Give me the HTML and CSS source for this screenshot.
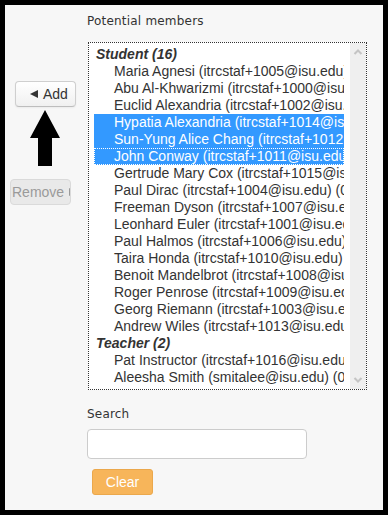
FILE: index.html
```html
<!DOCTYPE html>
<html>
<head>
<meta charset="utf-8">
<link rel="stylesheet" href="styles.css">
</head>
<body>
<div class="frame">
  <div class="side">
    <button class="btn-add"><span class="tri-left"></span>Add</button>
    <svg class="pointer" width="30" height="56" viewBox="0 0 30 56"><polygon points="15,0 30,28 22,28 22,56 8,56 8,28 0,28" fill="#000"/></svg>
    <button class="btn-remove" disabled>Remove<span class="tri-right"></span></button>
  </div>
  <div class="main">
    <div class="label">Potential members</div>
    <div class="listbox">
      <div class="items">
        <div class="group">Student (16)</div>
        <div class="opt">Maria Agnesi (itrcstaf+1005@isu.edu) (0)</div>
        <div class="opt">Abu Al-Khwarizmi (itrcstaf+1000@isu.edu) (0)</div>
        <div class="opt">Euclid Alexandria (itrcstaf+1002@isu.edu) (0)</div>
        <div class="opt sel">Hypatia Alexandria (itrcstaf+1014@isu.edu) (0)</div>
        <div class="opt sel">Sun-Yung Alice Chang (itrcstaf+1012@isu.edu) (0)</div>
        <div class="opt sel focus">John Conway (itrcstaf+1011@isu.edu) (0)</div>
        <div class="opt">Gertrude Mary Cox (itrcstaf+1015@isu.edu) (0)</div>
        <div class="opt">Paul Dirac (itrcstaf+1004@isu.edu) (0)</div>
        <div class="opt">Freeman Dyson (itrcstaf+1007@isu.edu) (0)</div>
        <div class="opt">Leonhard Euler (itrcstaf+1001@isu.edu) (0)</div>
        <div class="opt">Paul Halmos (itrcstaf+1006@isu.edu) (0)</div>
        <div class="opt">Taira Honda (itrcstaf+1010@isu.edu) (0)</div>
        <div class="opt">Benoit Mandelbrot (itrcstaf+1008@isu.edu) (0)</div>
        <div class="opt">Roger Penrose (itrcstaf+1009@isu.edu) (0)</div>
        <div class="opt">Georg Riemann (itrcstaf+1003@isu.edu) (0)</div>
        <div class="opt">Andrew Wiles (itrcstaf+1013@isu.edu) (0)</div>
        <div class="group">Teacher (2)</div>
        <div class="opt">Pat Instructor (itrcstaf+1016@isu.edu) (0)</div>
        <div class="opt">Aleesha Smith (smitalee@isu.edu) (0)</div>
      </div>
      <div class="scrollbar">
        <svg width="16" height="12" viewBox="0 0 16 12"><polyline points="4.5,9 8,5.5 11.5,9" fill="none" stroke="#c4c4c4" stroke-width="2"/></svg>
        <svg width="16" height="12" viewBox="0 0 16 12"><polyline points="4.5,3 8,6.5 11.5,3" fill="none" stroke="#c4c4c4" stroke-width="2"/></svg>
      </div>
    </div>
    <div class="label search-label">Search</div>
    <input class="search" type="text">
    <button class="btn-clear">Clear</button>
  </div>
</div>
</body>
</html>
```
FILE: styles.css
```css
html, body {
  margin: 0;
  padding: 0;
}
body {
  background: #000;
  padding: 5px;
  width: 378px;
  height: 505px;
}
.frame {
  background: #f7f7f7;
  height: 505px;
  display: flex;
}
.side {
  width: 82px;
  display: flex;
  flex-direction: column;
  align-items: flex-start;
  padding-top: 76px;
}
.btn-add {
  margin-left: 10px;
  width: 61px;
  height: 26px;
  padding: 0 0 0 14px;
  display: flex;
  align-items: center;
  border: 1px solid #cfcfcf;
  border-bottom-color: #bdbdbd;
  border-radius: 4px;
  background: linear-gradient(#ffffff, #f0f0f0);
  color: #333;
  font: 14px "Liberation Sans", Arial, sans-serif;
  box-shadow: 0 1px 2px rgba(0,0,0,.05);
}
.tri-left {
  display: inline-block;
  width: 0;
  height: 0;
  border-right: 8px solid #333;
  border-top: 4.5px solid transparent;
  border-bottom: 4.5px solid transparent;
  margin-right: 5px;
}
.pointer {
  display: block;
  margin-left: 25px;
  margin-top: 3px;
}
.btn-remove {
  margin-left: 5px;
  margin-top: 13px;
  width: 61px;
  height: 26px;
  padding: 0 0 0 1px;
  display: flex;
  align-items: center;
  overflow: hidden;
  white-space: nowrap;
  border: 1px solid #dadada;
  border-radius: 4px;
  background: #e9e9e9;
  color: #9a9a9a;
  font: 14px "Liberation Sans", Arial, sans-serif;
}
.tri-right {
  display: inline-block;
  flex: none;
  width: 0;
  height: 0;
  border-left: 8px solid #9a9a9a;
  border-top: 4.5px solid transparent;
  border-bottom: 4.5px solid transparent;
  margin-left: 5px;
}
.main {
  display: flex;
  flex-direction: column;
  align-items: flex-start;
  padding-top: 7px;
}
.label {
  font: 12px/18px "DejaVu Sans", Verdana, sans-serif;
  letter-spacing: 0.2px;
  color: #333;
  margin-bottom: 12px;
}
.listbox {
  margin-left: 1px;
  width: 277px;
  height: 346px;
  border: 1px dotted #333;
  background: #fff;
  display: flex;
}
.items {
  width: 250px;
  padding: 3px 6px 3px 5px;
  overflow: hidden;
  font: 14px/17px "Liberation Sans", Arial, sans-serif;
  color: #333;
}
.group {
  height: 17px;
  padding-left: 2px;
  font-weight: bold;
  font-style: italic;
  white-space: nowrap;
}
.opt {
  height: 17px;
  padding-left: 20px;
  white-space: nowrap;
  overflow: hidden;
}
.opt.sel {
  background: #3399ff;
  color: #fff;
}
.opt.focus {
  outline: 1px dotted #fff;
  outline-offset: -1px;
}
.scrollbar {
  width: 16px;
  background: #efefef;
  display: flex;
  flex-direction: column;
  justify-content: space-between;
  padding: 2px 0 2px 0;
}
.scrollbar svg {
  display: block;
}
.search-label {
  margin-top: 15px;
  margin-bottom: 6px;
}
.search {
  width: 220px;
  height: 30px;
  box-sizing: border-box;
  border: 1px solid #ccc;
  border-radius: 4px;
  background: #fff;
  margin: 0;
}
.btn-clear {
  margin-top: 10px;
  margin-left: 5px;
  width: 61px;
  height: 26px;
  padding: 0;
  border: 1px solid #eba84c;
  border-radius: 3px;
  background: #f7b55a;
  color: #fff;
  font: 14px "Liberation Sans", Arial, sans-serif;
}
```
